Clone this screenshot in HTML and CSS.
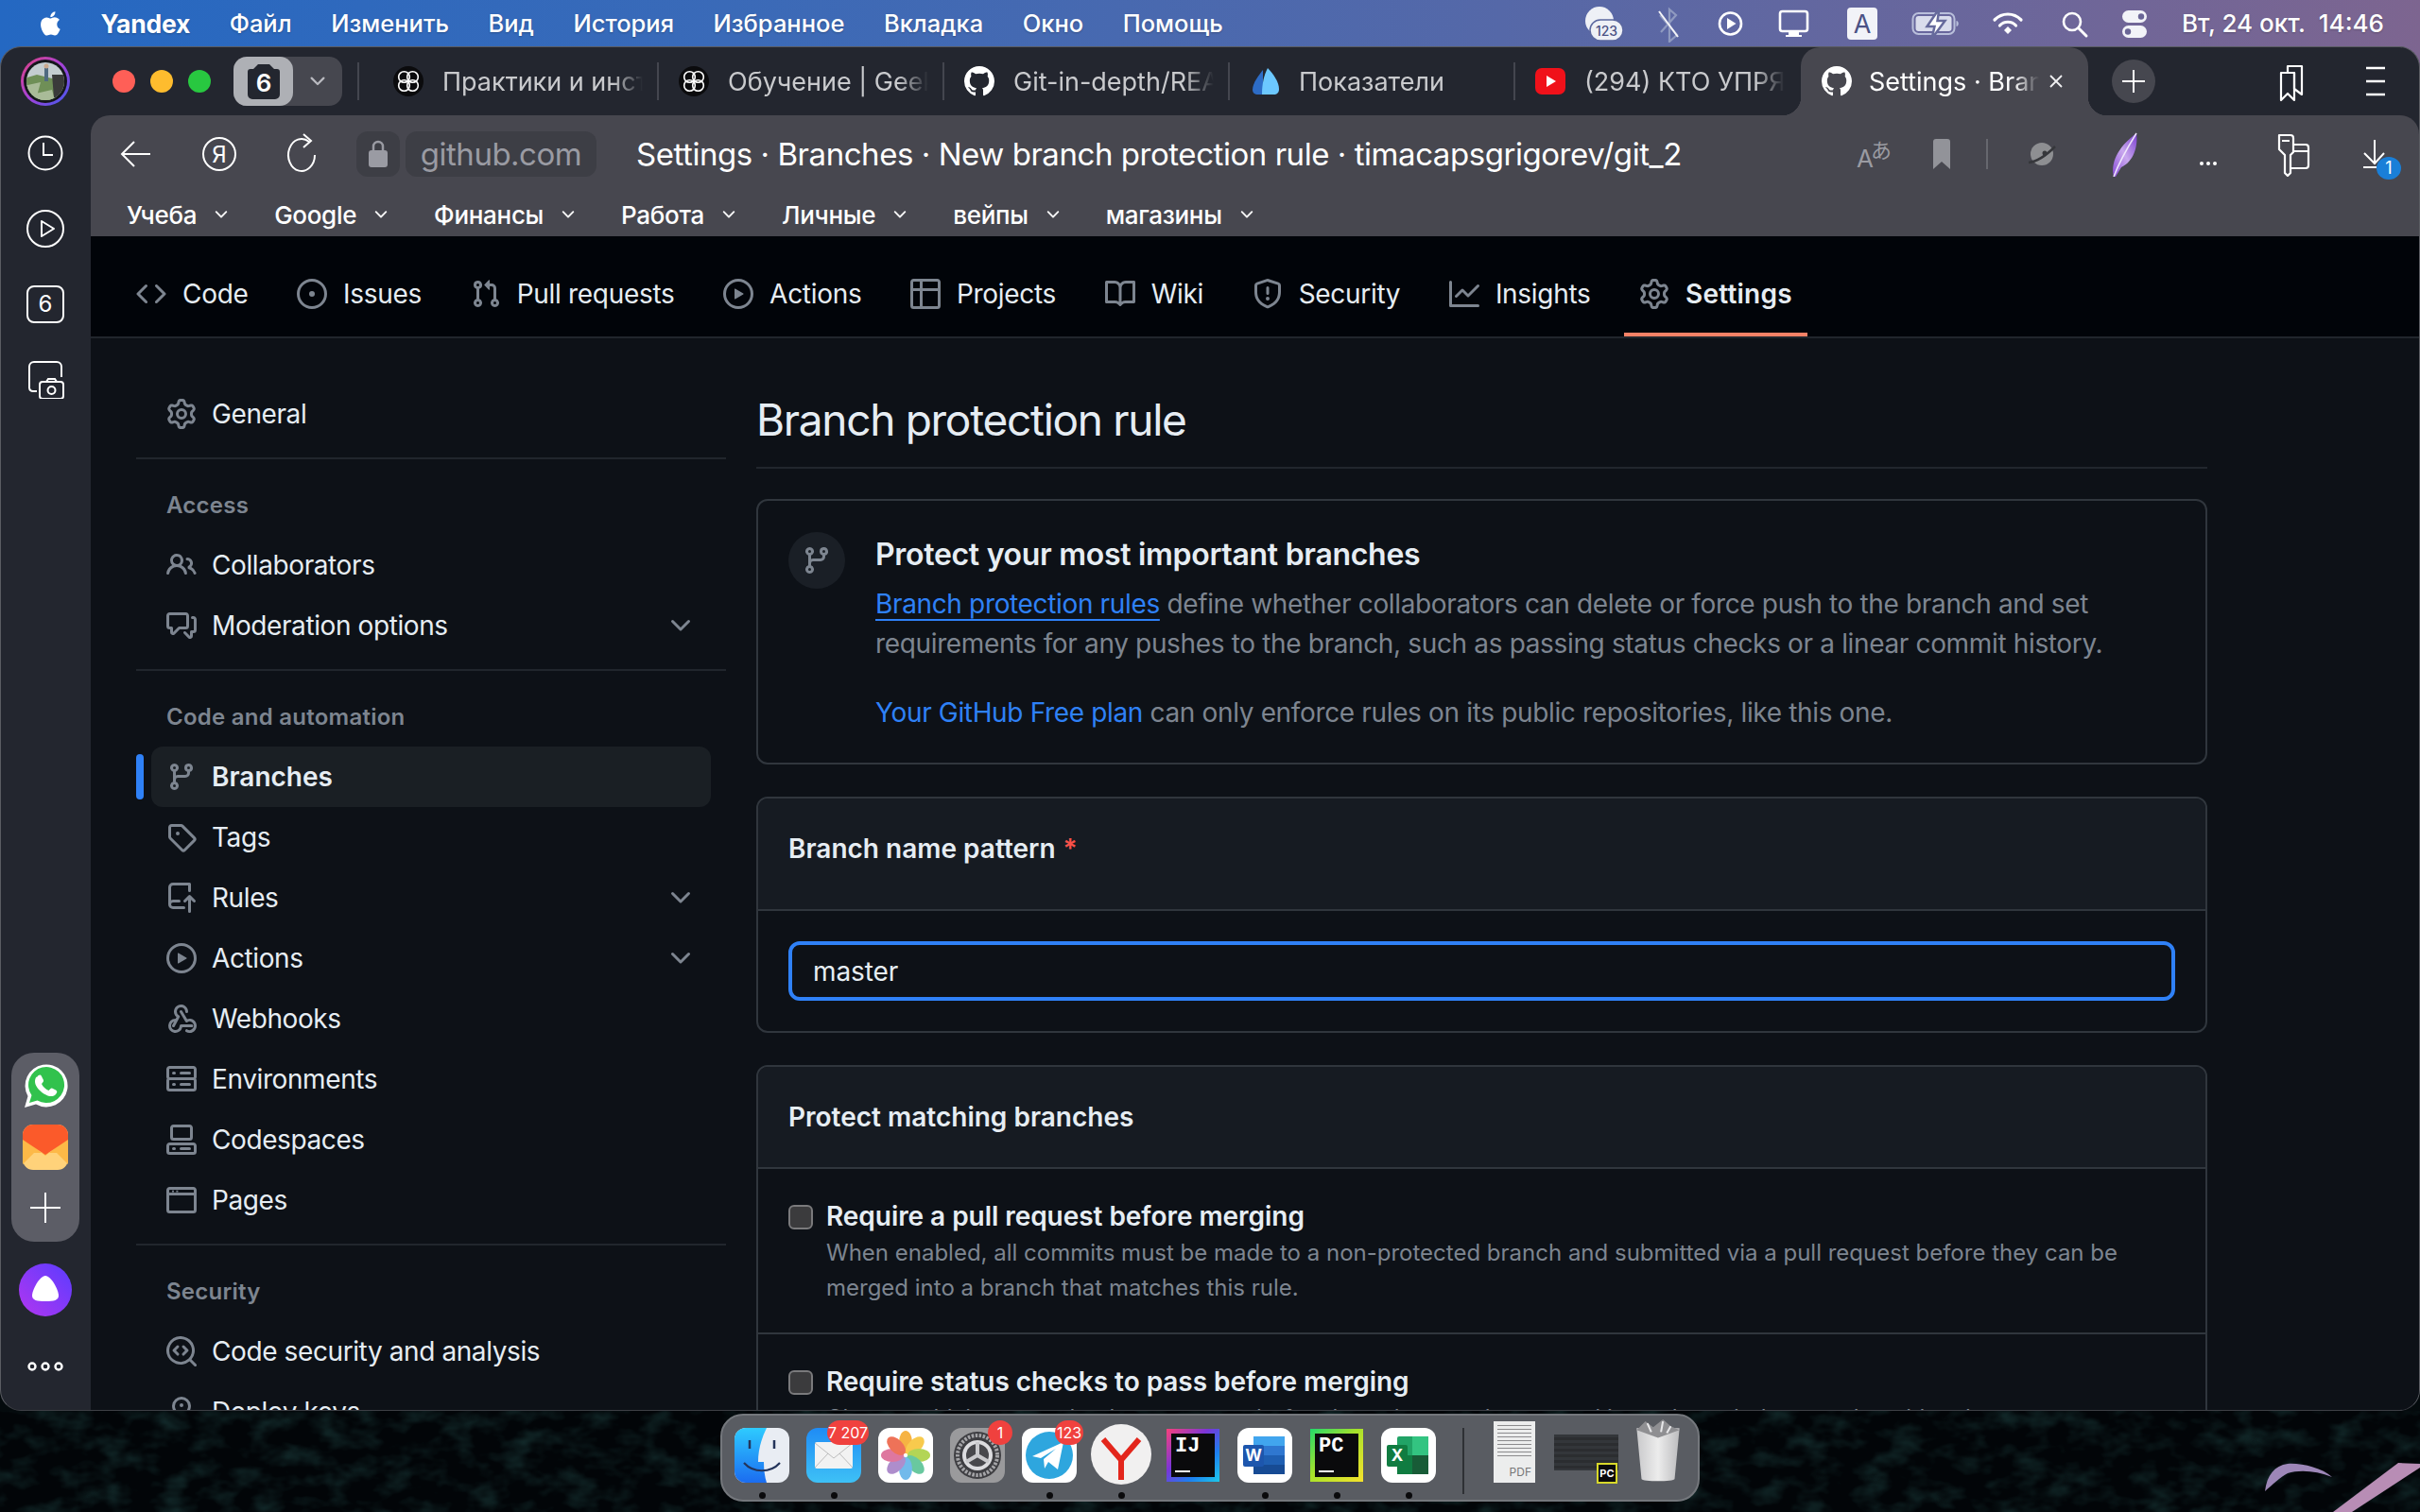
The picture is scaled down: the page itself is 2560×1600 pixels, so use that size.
FILE: index.html
```html
<!DOCTYPE html>
<html lang="ru">
<head>
    <meta charset="UTF-8">
    <title>Settings · Branches · New branch protection rule</title>
    <link rel="stylesheet" href="styles.css">
</head>
<body>
    <!-- Octicons -->
    <svg class="sprite">
        <symbol id="i-code" viewBox="0 0 16 16"><path d="m11.28 3.22 4.25 4.25a.75.75 0 0 1 0 1.06l-4.25 4.25a.749.749 0 0 1-1.275-.326.749.749 0 0 1 .215-.734L13.94 8l-3.72-3.72a.749.749 0 0 1 .326-1.275.749.749 0 0 1 .734.215Zm-6.56 0a.751.751 0 0 1 1.042.018.751.751 0 0 1 .018 1.042L2.06 8l3.72 3.72a.749.749 0 0 1-.326 1.275.749.749 0 0 1-.734-.215L.47 8.53a.75.75 0 0 1 0-1.06Z"/></symbol>
        <symbol id="i-issue" viewBox="0 0 16 16"><path d="M8 9.5a1.5 1.5 0 1 0 0-3 1.5 1.5 0 0 0 0 3Z"/><path d="M8 0a8 8 0 1 1 0 16A8 8 0 0 1 8 0ZM1.5 8a6.5 6.5 0 1 0 13 0 6.5 6.5 0 0 0-13 0Z"/></symbol>
        <symbol id="i-pr" viewBox="0 0 16 16"><path d="M1.5 3.25a2.25 2.25 0 1 1 3 2.122v5.256a2.251 2.251 0 1 1-1.5 0V5.372A2.25 2.25 0 0 1 1.5 3.25Zm5.677-.177L9.573.677A.25.25 0 0 1 10 .854V2.5h1A2.5 2.5 0 0 1 13.5 5v5.628a2.251 2.251 0 1 1-1.5 0V5a1 1 0 0 0-1-1h-1v1.646a.25.25 0 0 1-.427.177L7.177 3.427a.25.25 0 0 1 0-.354ZM3.75 2.5a.75.75 0 1 0 0 1.5.75.75 0 0 0 0-1.5Zm0 9.5a.75.75 0 1 0 0 1.5.75.75 0 0 0 0-1.5Zm8.25.75a.75.75 0 1 0 1.5 0 .75.75 0 0 0-1.5 0Z"/></symbol>
        <symbol id="i-play" viewBox="0 0 16 16"><path d="M8 0a8 8 0 1 1 0 16A8 8 0 0 1 8 0ZM1.5 8a6.5 6.5 0 1 0 13 0 6.5 6.5 0 0 0-13 0Zm4.879-2.773 4.264 2.559a.25.25 0 0 1 0 .428l-4.264 2.559A.25.25 0 0 1 6 10.559V5.442a.25.25 0 0 1 .379-.215Z"/></symbol>
        <symbol id="i-table" viewBox="0 0 16 16"><path d="M0 1.75C0 .784.784 0 1.75 0h12.5C15.216 0 16 .784 16 1.75v12.5A1.75 1.75 0 0 1 14.25 16H1.75A1.75 1.75 0 0 1 0 14.25ZM6.5 6.5v8h7.75a.25.25 0 0 0 .25-.25V6.5Zm8-1.5V1.75a.25.25 0 0 0-.25-.25H6.5V5Zm-13 1.5v7.75c0 .138.112.25.25.25H5v-8ZM5 5V1.5H1.75a.25.25 0 0 0-.25.25V5Z"/></symbol>
        <symbol id="i-book" viewBox="0 0 16 16"><path d="M0 1.75A.75.75 0 0 1 .75 1h4.253c1.227 0 2.317.59 3 1.501A3.743 3.743 0 0 1 11.006 1h4.245a.75.75 0 0 1 .75.75v10.5a.75.75 0 0 1-.75.75h-4.507a2.25 2.25 0 0 0-1.591.659l-.622.621a.75.75 0 0 1-1.06 0l-.622-.621A2.25 2.25 0 0 0 5.258 13H.75a.75.75 0 0 1-.75-.75Zm7.251 10.324.004-5.073-.002-2.253A2.25 2.25 0 0 0 5.003 2.5H1.5v9h3.757a3.75 3.75 0 0 1 1.994.574ZM8.755 4.75l-.004 7.322a3.752 3.752 0 0 1 1.992-.572H14.5v-9h-3.495a2.25 2.25 0 0 0-2.25 2.25Z"/></symbol>
        <symbol id="i-shield" viewBox="0 0 16 16"><path d="M7.467.133a1.748 1.748 0 0 1 1.066 0l5.25 1.68A1.75 1.75 0 0 1 15 3.48V7c0 1.566-.32 3.182-1.303 4.682-.983 1.498-2.585 2.813-5.032 3.855a1.697 1.697 0 0 1-1.33 0c-2.447-1.042-4.049-2.357-5.032-3.855C1.32 10.182 1 8.566 1 7V3.48a1.75 1.75 0 0 1 1.217-1.667Zm.61 1.429a.25.25 0 0 0-.153 0l-5.25 1.68a.25.25 0 0 0-.174.238V7c0 1.358.275 2.666 1.057 3.86.784 1.194 2.121 2.34 4.366 3.297a.196.196 0 0 0 .154 0c2.245-.956 3.582-2.104 4.366-3.298C13.225 9.666 13.5 8.36 13.5 7V3.48a.251.251 0 0 0-.174-.237l-5.25-1.68ZM8.75 4.75v3a.75.75 0 0 1-1.5 0v-3a.75.75 0 0 1 1.5 0ZM9 10.5a1 1 0 1 1-2 0 1 1 0 0 1 2 0Z"/></symbol>
        <symbol id="i-graph" viewBox="0 0 16 16"><path d="M1.5 1.75V13.5h13.75a.75.75 0 0 1 0 1.5H.75a.75.75 0 0 1-.75-.75V1.75a.75.75 0 0 1 1.5 0Zm14.28 2.53-5.25 5.25a.75.75 0 0 1-1.06 0L7 7.06 4.28 9.78a.751.751 0 0 1-1.042-.018.751.751 0 0 1-.018-1.042l3.25-3.25a.75.75 0 0 1 1.06 0L10 7.94l4.72-4.72a.751.751 0 0 1 1.042.018.751.751 0 0 1 .018 1.042Z"/></symbol>
        <symbol id="i-gear" viewBox="0 0 16 16"><path d="M8 0a8.2 8.2 0 0 1 .701.031C9.444.095 9.99.645 10.16 1.29l.288 1.107c.018.066.079.158.212.224.231.114.454.243.668.386.123.082.233.09.299.071l1.103-.303c.644-.176 1.392.021 1.82.63.27.385.506.792.704 1.218.315.675.111 1.422-.364 1.891l-.814.806c-.049.048-.098.147-.088.294.016.257.016.515 0 .772-.01.147.038.246.088.294l.814.806c.475.469.679 1.216.364 1.891a7.977 7.977 0 0 1-.704 1.217c-.428.61-1.176.807-1.82.63l-1.102-.302c-.067-.019-.177-.011-.3.071a5.909 5.909 0 0 1-.668.386c-.133.066-.194.158-.211.224l-.29 1.106c-.168.646-.715 1.196-1.458 1.26a8.006 8.006 0 0 1-1.402 0c-.743-.064-1.289-.614-1.458-1.26l-.289-1.106c-.018-.066-.079-.158-.212-.224a5.738 5.738 0 0 1-.668-.386c-.123-.082-.233-.09-.299-.071l-1.103.303c-.644.176-1.392-.021-1.82-.63a8.12 8.12 0 0 1-.704-1.218c-.315-.675-.111-1.422.363-1.891l.815-.806c.05-.048.098-.147.088-.294a6.214 6.214 0 0 1 0-.772c.01-.147-.038-.246-.088-.294l-.815-.806C.635 6.045.431 5.298.746 4.623a7.92 7.92 0 0 1 .704-1.217c.428-.61 1.176-.807 1.82-.63l1.102.302c.067.019.177.011.3-.071.214-.143.437-.272.668-.386.133-.066.194-.158.211-.224l.29-1.106C6.009.645 6.556.095 7.299.03 7.53.01 7.764 0 8 0Zm-.571 1.525c-.036.003-.108.036-.137.146l-.289 1.105c-.147.561-.549.967-.998 1.189-.173.086-.34.183-.5.29-.417.278-.97.423-1.529.27l-1.103-.303c-.109-.03-.175.016-.195.045-.22.312-.412.644-.573.99-.014.031-.021.11.059.19l.815.806c.411.406.562.957.53 1.456a4.709 4.709 0 0 0 0 .582c.032.499-.119 1.05-.53 1.456l-.815.806c-.081.08-.073.159-.059.19.162.346.353.677.573.989.02.03.085.076.195.046l1.102-.303c.56-.153 1.113-.008 1.53.27.161.107.328.204.501.29.447.222.85.629.997 1.189l.289 1.105c.029.109.101.143.137.146a6.6 6.6 0 0 0 1.142 0c.036-.003.108-.036.137-.146l.289-1.105c.147-.561.549-.967.998-1.189.173-.086.34-.183.5-.29.417-.278.97-.423 1.529-.27l1.103.303c.109.029.175-.016.195-.045.22-.313.411-.644.573-.99.014-.031.021-.11-.059-.19l-.815-.806c-.411-.406-.562-.957-.53-1.456a4.709 4.709 0 0 0 0-.582c-.032-.499.119-1.05.53-1.456l.815-.806c.081-.08.073-.159.059-.19a6.464 6.464 0 0 0-.573-.989c-.02-.03-.085-.076-.195-.046l-1.102.303c-.56.153-1.113.008-1.53-.27a4.44 4.44 0 0 0-.501-.29c-.447-.222-.85-.629-.997-1.189l-.289-1.105c-.029-.11-.101-.143-.137-.146a6.6 6.6 0 0 0-1.142 0ZM11 8a3 3 0 1 1-6 0 3 3 0 0 1 6 0ZM9.5 8a1.5 1.5 0 1 0-3.001.001A1.5 1.5 0 0 0 9.5 8Z"/></symbol>
        <symbol id="i-people" viewBox="0 0 16 16"><path d="M2 5.5a3.5 3.5 0 1 1 5.898 2.549 5.508 5.508 0 0 1 3.034 4.084.75.75 0 1 1-1.482.235 4 4 0 0 0-7.9 0 .75.75 0 0 1-1.482-.236A5.507 5.507 0 0 1 3.102 8.05 3.493 3.493 0 0 1 2 5.5ZM11 4a3.001 3.001 0 0 1 2.22 5.018 5.01 5.01 0 0 1 2.56 3.012.749.749 0 0 1-.885.954.752.752 0 0 1-.549-.514 3.507 3.507 0 0 0-2.522-2.372.75.75 0 0 1-.574-.73v-.352a.75.75 0 0 1 .416-.672A1.5 1.5 0 0 0 11 5.5.75.75 0 0 1 11 4Zm-5.5-.5a2 2 0 1 0-.001 3.999A2 2 0 0 0 5.5 3.5Z"/></symbol>
        <symbol id="i-comment" viewBox="0 0 16 16"><path d="M1.75 1h8.5c.966 0 1.75.784 1.75 1.75v5.5A1.75 1.75 0 0 1 10.25 10H7.061l-2.574 2.573A1.458 1.458 0 0 1 2 11.543V10h-.25A1.75 1.75 0 0 1 0 8.25v-5.5C0 1.784.784 1 1.75 1ZM1.5 2.75v5.5c0 .138.112.25.25.25h1a.75.75 0 0 1 .75.75v2.19l2.72-2.72a.749.749 0 0 1 .53-.22h3.5a.25.25 0 0 0 .25-.25v-5.5a.25.25 0 0 0-.25-.25h-8.5a.25.25 0 0 0-.25.25Zm13 2a.25.25 0 0 0-.25-.25h-.5a.75.75 0 0 1 0-1.5h.5c.966 0 1.75.784 1.75 1.75v5.5A1.75 1.75 0 0 1 14.25 12H14v1.543a1.458 1.458 0 0 1-2.487 1.03L9.22 12.28a.749.749 0 0 1 .326-1.275.749.749 0 0 1 .734.215l2.22 2.22v-2.19a.75.75 0 0 1 .75-.75h1a.25.25 0 0 0 .25-.25Z"/></symbol>
        <symbol id="i-branch" viewBox="0 0 16 16"><path d="M9.5 3.25a2.25 2.25 0 1 1 3 2.122V6A2.5 2.5 0 0 1 10 8.5H6a1 1 0 0 0-1 1v1.128a2.251 2.251 0 1 1-1.5 0V5.372a2.25 2.25 0 1 1 1.5 0v1.836A2.493 2.493 0 0 1 6 7h4a1 1 0 0 0 1-1v-.628A2.25 2.25 0 0 1 9.5 3.25Zm-6 0a.75.75 0 1 0 1.5 0 .75.75 0 0 0-1.5 0Zm8.25-.75a.75.75 0 1 0 0 1.5.75.75 0 0 0 0-1.5ZM4.25 12a.75.75 0 1 0 0 1.5.75.75 0 0 0 0-1.5Z"/></symbol>
        <symbol id="i-tag" viewBox="0 0 16 16"><path d="M1 7.775V2.75C1 1.784 1.784 1 2.75 1h5.025c.464 0 .91.184 1.238.513l6.25 6.25a1.75 1.75 0 0 1 0 2.474l-5.026 5.026a1.75 1.75 0 0 1-2.474 0l-6.25-6.25A1.752 1.752 0 0 1 1 7.775Zm1.5 0c0 .066.026.13.073.177l6.25 6.25a.25.25 0 0 0 .354 0l5.025-5.025a.25.25 0 0 0 0-.354l-6.25-6.25a.25.25 0 0 0-.177-.073H2.75a.25.25 0 0 0-.25.25ZM6 5a1 1 0 1 1 0 2 1 1 0 0 1 0-2Z"/></symbol>
        <symbol id="i-rules" viewBox="0 0 16 16"><path d="M1 2.5A2.5 2.5 0 0 1 3.5 0h8.75a.75.75 0 0 1 .75.75v3.5a.75.75 0 0 1-1.5 0V1.5h-8a1 1 0 0 0-1 1v6.708A2.492 2.492 0 0 1 3.5 9h3.25a.75.75 0 0 1 0 1.5H3.5a1 1 0 0 0 0 2h5.75a.75.75 0 0 1 0 1.5H3.5A2.5 2.5 0 0 1 1 11.5Zm13.23 7.79h-.001l-1.224-1.224v6.184a.75.75 0 0 1-1.5 0V9.066L10.28 10.29a.75.75 0 0 1-1.06-1.061l2.505-2.504a.75.75 0 0 1 1.06 0L15.29 9.23a.751.751 0 0 1-.018 1.042.751.751 0 0 1-1.042.018Z"/></symbol>
        <symbol id="i-webhook" viewBox="0 0 16 16"><path d="M5.5 4.25a2.25 2.25 0 0 1 4.5 0 .75.75 0 0 0 1.5 0 3.75 3.75 0 1 0-6.14 2.889l-2.272 4.258a.75.75 0 0 0 1.324.706L7 7.25a.75.75 0 0 0-.309-1.015A2.25 2.25 0 0 1 5.5 4.25Z"/><path d="M7.364 3.607a.75.75 0 0 1 1.03.257l2.608 4.349a3.75 3.75 0 1 1-.628 6.785.75.75 0 0 1 .752-1.299 2.25 2.25 0 1 0-.033-3.88.75.75 0 0 1-1.03-.256L7.107 4.636a.75.75 0 0 1 .257-1.03Z"/><path d="M2.5 11.75a2.25 2.25 0 0 1 2.25-2.25.75.75 0 0 0 0-1.5 3.75 3.75 0 1 0 3.675 4.5h5.075a.75.75 0 0 0 0-1.5H7.75a.75.75 0 0 0-.75.75 2.25 2.25 0 0 1-4.5 0Z"/></symbol>
        <symbol id="i-server" viewBox="0 0 16 16"><path d="M1.75 1h12.5c.966 0 1.75.784 1.75 1.75v4c0 .372-.116.717-.314 1 .198.283.314.628.314 1v4a1.75 1.75 0 0 1-1.75 1.75H1.75A1.75 1.75 0 0 1 0 12.75v-4c0-.372.116-.717.314-1A1.739 1.739 0 0 1 0 6.75v-4C0 1.784.784 1 1.75 1ZM1.5 2.75v4c0 .138.112.25.25.25h12.5a.25.25 0 0 0 .25-.25v-4a.25.25 0 0 0-.25-.25H1.75a.25.25 0 0 0-.25.25Zm.25 5.75a.25.25 0 0 0-.25.25v4c0 .138.112.25.25.25h12.5a.25.25 0 0 0 .25-.25v-4a.25.25 0 0 0-.25-.25ZM7 4.75A.75.75 0 0 1 7.75 4h4.5a.75.75 0 0 1 0 1.5h-4.5A.75.75 0 0 1 7 4.75ZM7.75 10h4.5a.75.75 0 0 1 0 1.5h-4.5a.75.75 0 0 1 0-1.5ZM3 4.75A.75.75 0 0 1 3.75 4h.5a.75.75 0 0 1 0 1.5h-.5A.75.75 0 0 1 3 4.75ZM3.75 10h.5a.75.75 0 0 1 0 1.5h-.5a.75.75 0 0 1 0-1.5Z"/></symbol>
        <symbol id="i-codespaces" viewBox="0 0 16 16"><path d="M0 11.25c0-.966.784-1.75 1.75-1.75h12.5c.966 0 1.75.784 1.75 1.75v3A1.75 1.75 0 0 1 14.25 16H1.75A1.75 1.75 0 0 1 0 14.25Zm2-9.5C2 .784 2.784 0 3.75 0h8.5C13.216 0 14 .784 14 1.75v5a1.75 1.75 0 0 1-1.75 1.75h-8.5A1.75 1.75 0 0 1 2 6.75Zm1.75-.25a.25.25 0 0 0-.25.25v5c0 .138.112.25.25.25h8.5a.25.25 0 0 0 .25-.25v-5a.25.25 0 0 0-.25-.25Zm-2 9.5a.25.25 0 0 0-.25.25v3c0 .138.112.25.25.25h12.5a.25.25 0 0 0 .25-.25v-3a.25.25 0 0 0-.25-.25Z"/><path d="M7 12.75a.75.75 0 0 1 .75-.75h4.5a.75.75 0 0 1 0 1.5h-4.5a.75.75 0 0 1-.75-.75Zm-4 0a.75.75 0 0 1 .75-.75h.5a.75.75 0 0 1 0 1.5h-.5a.75.75 0 0 1-.75-.75Z"/></symbol>
        <symbol id="i-browser" viewBox="0 0 16 16"><path d="M0 2.75C0 1.784.784 1 1.750 1h12.500c.966 0 1.750.784 1.750 1.750v10.500A1.750 1.750 0 0 1 14.250 15H1.750A1.750 1.750 0 0 1 0 13.250ZM14.500 5.500h-13v7.750c0 .138.112.25.25.25h12.500a.25.25 0 0 0 .25-.25Zm-13-1.500h13V2.750a.25.25 0 0 0-.25-.25H1.750a.25.25 0 0 0-.25.25ZM3 2.900h1v.9H3Zm2.200 0h1v.9h-1Z"/></symbol>
        <symbol id="i-codescan" viewBox="0 0 16 16"><path d="M8.47 4.97a.75.75 0 0 0 0 1.06L9.94 7.5 8.47 8.97a.75.75 0 1 0 1.06 1.06l2-2a.75.75 0 0 0 0-1.06l-2-2a.75.75 0 0 0-1.06 0ZM6.53 6.03a.75.75 0 0 0-1.06-1.06l-2 2a.75.75 0 0 0 0 1.06l2 2a.75.75 0 1 0 1.06-1.06L5.06 7.5l1.47-1.47Z"/><path d="M12.246 13.307a7.501 7.501 0 1 1 1.06-1.06l2.474 2.473a.749.749 0 0 1-.326 1.275.749.749 0 0 1-.734-.215ZM1.5 7.5a6.002 6.002 0 0 0 3.608 5.504 6.002 6.002 0 0 0 6.486-1.117.748.748 0 0 1 .292-.293A6 6 0 1 0 1.5 7.5Z"/></symbol>
        <symbol id="i-key" viewBox="0 0 16 16"><path d="M8 0a5 5 0 0 1 .75 9.94V11h1.5a.75.75 0 0 1 0 1.5h-1.5v2.75a.75.75 0 0 1-1.5 0V9.94A5 5 0 0 1 8 0Zm0 1.5a3.5 3.5 0 1 0 0 7 3.5 3.5 0 0 0 0-7ZM8 3.5a1 1 0 1 1 0 2 1 1 0 0 1 0-2Z"/></symbol>
        <symbol id="i-chevron" viewBox="0 0 16 16"><path d="M12.78 5.22a.749.749 0 0 1 0 1.06l-4.25 4.25a.749.749 0 0 1-1.06 0L3.22 6.28a.749.749 0 1 1 1.06-1.06L8 8.939l3.72-3.719a.749.749 0 0 1 1.06 0Z"/></symbol>
        <symbol id="i-github" viewBox="0 0 16 16"><path d="M8 0c4.42 0 8 3.58 8 8a8.013 8.013 0 0 1-5.45 7.59c-.4.08-.55-.17-.55-.38 0-.27.01-1.13.01-2.2 0-.75-.25-1.23-.54-1.48 1.78-.2 3.65-.88 3.65-3.95 0-.88-.31-1.59-.82-2.15.08-.2.36-1.02-.08-2.12 0 0-.67-.22-2.2.82-.64-.18-1.32-.27-2-.27-.68 0-1.36.09-2 .27-1.53-1.03-2.2-.82-2.2-.82-.44 1.1-.16 1.92-.08 2.12-.51.56-.82 1.28-.82 2.15 0 3.06 1.86 3.75 3.64 3.95-.23.2-.44.55-.51 1.07-.46.21-1.61.55-2.33-.66-.15-.24-.6-.83-1.23-.82-.67.01-.27.38.01.53.34.19.73.9.82 1.13.16.45.68 1.31 2.69.94 0 .67.01 1.3.01 1.49 0 .21-.15.45-.55.38A7.995 7.995 0 0 1 0 8c0-4.42 3.58-8 8-8Z"/></symbol>
        <symbol id="i-knot" viewBox="0 0 32 32"><circle cx="16" cy="16" r="16" fill="#0b0b0d"/><g fill="none" stroke="#fff" stroke-width="1.600"><circle cx="11.500" cy="11.500" r="5.800"/><circle cx="20.500" cy="11.500" r="5.800"/><circle cx="11.500" cy="20.500" r="5.800"/><circle cx="20.500" cy="20.500" r="5.800"/></g></symbol>
    </svg>

    <!-- macOS menu bar -->
    <div class="menubar">
        <svg class="apple" viewBox="0 0 24 24"><path d="M17.05 12.54c-.03-2.55 2.08-3.77 2.18-3.83-1.19-1.74-3.04-1.98-3.7-2.01-1.57-.16-3.07.93-3.87.93-.8 0-2.03-.9-3.34-.88-1.72.03-3.3 1-4.19 2.54-1.79 3.1-.46 7.69 1.28 10.21.85 1.23 1.86 2.61 3.19 2.56 1.28-.05 1.77-.83 3.31-.83 1.54 0 1.98.83 3.34.8 1.38-.02 2.25-1.25 3.09-2.49.98-1.43 1.38-2.82 1.4-2.89-.03-.01-2.68-1.03-2.71-4.11zM14.5 5.05c.71-.86 1.19-2.05 1.06-3.24-1.02.04-2.26.68-2.99 1.54-.66.76-1.23 1.97-1.08 3.14 1.14.09 2.3-.58 3.01-1.44z"/></svg>
        <strong class="menu-app">Yandex</strong>
        <span>Файл</span>
        <span>Изменить</span>
        <span>Вид</span>
        <span>История</span>
        <span>Избранное</span>
        <span>Вкладка</span>
        <span>Окно</span>
        <span>Помощь</span>
        <div class="tray">
            <svg width="70" height="40" viewBox="-35 -20 70 40"><circle cx="-4" cy="-3" r="15" fill="#eef0f6"/><rect x="-14" y="-4" width="35" height="22" rx="11" fill="#eef0f6" stroke="#5b679f" stroke-width="1.500"/><text x="3.500" y="13" class="tray-num">123</text></svg>
            <svg width="68" height="40" viewBox="-34 -20 68 40"><path d="M-9 -9 9 12 1 19V-15L8 -9-8 9" fill="none" stroke="#8f9ac0" stroke-width="2.200"/><path d="M-10 -13 10 14" stroke="#f4f4f8" stroke-width="2"/></svg>
            <svg width="63" height="40" viewBox="-31.500 -20 63 40"><circle r="11.500" fill="none" stroke="#fff" stroke-width="2.600"/><path d="M-3.500 -6 6 0-3.500 6Z" fill="#fff"/></svg>
            <svg width="70" height="40" viewBox="-35 -20 70 40"><rect x="-14" y="-13" width="29" height="21" rx="2.500" fill="none" stroke="#fff" stroke-width="2.600"/><path d="M-5 9h11v3h3v2h-17v-2h3Z" fill="#fff"/></svg>
            <svg width="76" height="40" viewBox="-38 -20 76 40"><rect x="-16" y="-17" width="32" height="34" rx="4" fill="#f2f3f8"/><text y="10" class="tray-key">A</text></svg>
            <svg width="79" height="40" viewBox="-39.500 -20 79 40"><rect x="-24" y="-11" width="44" height="22" rx="6" fill="none" stroke="#b9bfdb" stroke-width="2"/><rect x="-21" y="-8" width="38" height="16" rx="3" fill="#d9dcec"/><path d="M22 -3c3 0 3 6 0 6Z" fill="#b9bfdb"/><path d="M4 -16-9 3H-1L-4 16 10 -3H2Z" fill="#fff" stroke="#666a9c" stroke-width="2.500"/></svg>
            <svg width="74" height="40" viewBox="-37 -20 74 40"><g fill="none" stroke="#fff" stroke-width="3.200" stroke-linecap="round"><path d="M-14 -4C-6-12 6-12 14-4"/><path d="M-8.500 2C-4-3 4-3 8.500 2"/></g><path d="M-4 7 0 3 4 7 0 11Z" fill="#fff"/></svg>
            <svg width="66" height="40" viewBox="-33 -20 66 40"><circle cx="-2" cy="-2" r="9" fill="none" stroke="#fff" stroke-width="2.600"/><path d="M5 5 13 13" stroke="#fff" stroke-width="3" stroke-linecap="round"/></svg>
            <svg width="62" height="40" viewBox="-31 -20 62 40"><rect x="-13" y="-14" width="26" height="13" rx="6.500" fill="#f2f3f8"/><rect x="-13" y="2" width="26" height="13" rx="6.500" fill="#f2f3f8"/><circle cx="7" cy="-7.500" r="3.200" fill="#6a6696"/><circle cx="-7" cy="8.500" r="3.200" fill="#6a6696"/></svg>
            <span class="clock">Вт, 24 окт.&nbsp; 14:46</span>
        </div>
    </div>

    <div class="window">
        <!-- Browser side panel -->
        <aside class="side-panel">
            <div class="avatar">
                <svg width="46" height="46" viewBox="0 0 46 46"><defs><clipPath id="avatar-clip"><circle cx="23" cy="23" r="20"/></clipPath></defs><circle cx="23" cy="23" r="23" fill="#15171c"/><g clip-path="url(#avatar-clip)"><rect width="46" height="46" fill="#c4cdd0"/><path d="M0 20 14 16 46 24V46H0Z" fill="#6f8f57"/><path d="M0 28 18 24 12 46H0ZM4 38 30 32 34 46H6Z" fill="#a9bb98"/><path d="M30 16H44V40H32Z" fill="#3a3a3a"/><path d="M22 9h4v14h-4Z" fill="#4f6a80"/><circle cx="24" cy="7" r="2.500" fill="#caa98e"/></g></svg>
            </div>
            <div class="side-slot"><svg width="40" height="40" viewBox="0 0 40 40"><g fill="none" stroke="#fff" stroke-width="2"><circle cx="20" cy="20" r="17.500"/><path d="M18 9v13h10"/></g></svg></div>
            <div class="side-slot"><svg width="40" height="40" viewBox="0 0 40 40"><g fill="none" stroke="#fff" stroke-width="2"><circle cx="20" cy="20" r="19"/><path d="M16 12 29 20 16 28Z" stroke-linejoin="round"/></g></svg></div>
            <div class="side-slot"><svg width="40" height="40" viewBox="0 0 40 40"><rect x="1" y="1" width="38" height="38" rx="7" fill="none" stroke="#fff" stroke-width="2"/><text x="20" y="28" class="side-six">6</text></svg></div>
            <div class="side-slot"><svg width="40" height="40" viewBox="0 0 40 40"><g fill="none" stroke="#fff" stroke-width="2"><path d="M3 29V6a5 5 0 0 1 5-5h24a5 5 0 0 1 5 5v11M3 29a4 4 0 0 0 4 3h4"/><rect x="14" y="22" width="25" height="18" rx="3"/><path d="M21 22l2-3h7l2 3"/><circle cx="26.500" cy="31" r="4"/></g></svg></div>

            <div class="quick-apps">
                <svg width="48" height="48" viewBox="0 0 48 48"><path d="M2 46 5.500 34A22.500 22.500 0 1 1 14 42.500Z" fill="#fff"/><path d="M7 41 9.500 33A19 19 0 1 1 15.500 38.500Z" fill="#31c24d"/><path d="M15 14c2-3 4-3 5-1l2 4c.500 1-1 3-2 4 1.500 3 4 5.500 7.500 7 1-1 2.500-3 3.500-2.500l4 2c2 1 1.500 3-.500 5-3 2.500-7 2-12-1-6-4-9.500-9-9.500-13 0-2 .500-4 1.500-5Z" fill="#fff"/></svg>
                <svg width="48" height="48" viewBox="0 0 48 48"><rect width="48" height="48" rx="11" fill="#ffd27a"/><path d="M0 14 24 33 48 14V42L36 30H12L0 42Z" fill="#fdb947"/><path d="M0 11A11 11 0 0 1 11 0H37A11 11 0 0 1 48 11V16L24 32 0 16Z" fill="#fb5a2a"/></svg>
                <svg width="48" height="48" viewBox="0 0 48 48"><path d="M24 8V40M8 24H40" stroke="#fff" stroke-width="2"/></svg>
            </div>
            <svg class="alice" width="56" height="56" viewBox="0 0 56 56"><defs><linearGradient id="alice-bg" x1="1" y1="0" x2="0" y2="1"><stop offset="0" stop-color="#5a3cff"/><stop offset="1" stop-color="#b236f0"/></linearGradient></defs><circle cx="28" cy="28" r="28" fill="url(#alice-bg)"/><path d="M28 13c6 0 14 15 14 21 0 5-5 6-14 6s-14-1-14-6c0-6 8-21 14-21Z" fill="#fff"/></svg>
            <svg class="side-more" width="40" height="20" viewBox="0 0 40 20"><g fill="none" stroke="#fff" stroke-width="2.400"><circle cx="6" cy="10" r="3.500"/><circle cx="20" cy="10" r="3.500"/><circle cx="34" cy="10" r="3.500"/></g></svg>
        </aside>

        <div class="browser">
            <!-- Tab strip -->
            <div class="tabstrip">
                <span class="light light-red"></span>
                <span class="light light-yellow"></span>
                <span class="light light-green"></span>
                <div class="tab-group">
                    <span class="tab-group-count"><svg width="36" height="42" viewBox="0 0 36 42"><path d="M12 3h12l5 5h3a3 3 0 0 1 3 3v24a5 5 0 0 1-5 5H6a5 5 0 0 1-5-5V11a3 3 0 0 1 3-3h3Z" fill="#23262f"/><text x="18" y="32" class="group-six">6</text></svg></span>
                    <svg class="tab-group-arrow" viewBox="0 0 16 16"><use href="#i-chevron"/></svg>
                </div>
                <span class="tab-rule"></span>
                <div class="tab"><svg class="tab-icon" viewBox="0 0 32 32"><use href="#i-knot"/></svg><span class="tab-title">Практики и инструменты</span></div>
                <div class="tab"><svg class="tab-icon" viewBox="0 0 32 32"><use href="#i-knot"/></svg><span class="tab-title">Обучение | GeekBrains</span></div>
                <div class="tab"><svg class="tab-icon tab-icon-gh" viewBox="0 0 16 16"><use href="#i-github"/></svg><span class="tab-title">Git-in-depth/README.md</span></div>
                <div class="tab"><svg class="tab-icon" viewBox="0 0 32 32"><path d="M14 4C10 9 3 18 3 25c0 3 2 5 6 5h5Z" fill="#2d6cc6"/><path d="M19 2c-4 8-6 16-6 28h12c4 0 6-2 6-6 0-7-6-16-12-22Z" fill="#6cc8ff"/></svg><span class="tab-title">Показатели</span></div>
                <div class="tab tab-last"><svg class="tab-icon" viewBox="0 0 32 32"><rect y="2" width="32" height="28" rx="7" fill="#f0111a"/><path d="M12 10 22 16 12 22Z" fill="#fff"/></svg><span class="tab-title">(294) КТО УПРЯМЕЕ</span></div>
                <div class="tab tab-active">
                    <svg class="tab-icon tab-icon-gh" viewBox="0 0 16 16"><use href="#i-github"/></svg>
                    <span class="tab-title">Settings · Branches · New</span>
                    <svg class="tab-close" width="16" height="16" viewBox="0 0 16 16"><path d="M2 2 14 14M14 2 2 14" stroke="#f0f0f2" stroke-width="1.800"/></svg>
                </div>
                <span class="tab-new"><svg width="26" height="26" viewBox="0 0 26 26"><path d="M13 1V25M1 13H25" stroke="#fff" stroke-width="2"/></svg></span>
                <svg class="strip-tool" width="66" height="46" viewBox="-33 -23 66 46"><g fill="none" stroke="#fff" stroke-width="2.200" stroke-linejoin="round"><path d="M-4 -16H11V14L3 8V-9H-4Z"/><path d="M-11 -9H3V20L-4 13-11 20Z"/></g></svg>
                <svg class="strip-tool" width="102" height="46" viewBox="-56 -23 102 46"><path d="M-10 -14H10M-10 0H10M-10 14H10" stroke="#fff" stroke-width="2.600"/></svg>
            </div>

            <!-- Address bar + bookmarks -->
            <div class="chrome">
                <div class="address">
                    <svg width="88" height="48" viewBox="-44 -24 88 48"><path d="M15 0H-14M-2 -13-15 0-2 13" fill="none" stroke="#fff" stroke-width="2"/></svg>
                    <svg width="88" height="48" viewBox="-44 -24 88 48"><circle r="17" fill="none" stroke="#fff" stroke-width="2"/><text y="9" class="ya-letter">Я</text></svg>
                    <svg width="88" height="48" viewBox="-44 -24 88 48"><path d="M7 -13A14 17 0 1 0 13 1" fill="none" stroke="#fff" stroke-width="2"/><path d="M1 -21 9 -14 1 -7" fill="none" stroke="#fff" stroke-width="2"/></svg>
                    <span class="chip chip-lock"><svg width="20" height="30" viewBox="0 0 20 30"><path d="M5 12V7a5 5 0 0 1 10 0v5" fill="none" stroke="#9a9ba3" stroke-width="2.500"/><rect y="11" width="20" height="18" rx="3" fill="#9a9ba3"/></svg></span>
                    <span class="chip chip-host">github.com</span>
                    <span class="page-title">Settings · Branches · New branch protection rule · timacapsgrigorev/git_2</span>
                    <div class="tools">
                        <svg width="70" height="48" viewBox="-35 -24 70 48"><text x="-11" y="14" class="tr-a">A</text><text x="6" y="4" class="tr-kana">あ</text></svg>
                        <svg width="70" height="48" viewBox="-35 -24 70 48"><path d="M-9 -13a3 3 0 0 1 3-3H6a3 3 0 0 1 3 3V16L0 8-9 16Z" fill="#929399"/></svg>
                        <svg width="26" height="48" viewBox="-13 -24 26 48"><path d="M0 -16V16" stroke="#66676e" stroke-width="2"/></svg>
                        <svg width="90" height="48" viewBox="-45 -24 90 48"><circle r="12" fill="#8e8f92"/><path d="M-14 9C-4 8 6 0 14-8" stroke="#36373b" stroke-width="2.500" fill="none"/><circle cx="3" cy="-1" r="2.500" fill="#36373b"/></svg>
                        <svg width="86" height="48" viewBox="-43 -24 86 48"><defs><linearGradient id="quill" x1="1" y1="0" x2="0" y2="1"><stop offset="0" stop-color="#7a3fd0"/><stop offset=".5" stop-color="#c9a8ee"/><stop offset="1" stop-color="#8a4fd8"/></linearGradient></defs><path d="M-12 24C-16 6-4-10 12-22 14-8 9 8-4 14L-10 24Z" fill="url(#quill)"/><path d="M-12 24C-6 8 2-6 12-22" stroke="#efe6fb" stroke-width="1.500" fill="none"/></svg>
                        <svg width="90" height="48" viewBox="-45 -24 90 48"><circle cx="-7" cy="10" r="2" fill="#fff"/><circle cx="0" cy="10" r="2" fill="#fff"/><circle cx="7" cy="10" r="2" fill="#fff"/></svg>
                        <svg width="88" height="48" viewBox="-44 -24 88 48"><g fill="none" stroke="#fff" stroke-width="2.200"><path d="M-14 -20H-2A3 3 0 0 1 1 -17V-2L-2 1V20L-5 23-8 20V1L-14 -5Z" stroke-linejoin="round"/><path d="M1 -10H14A3 3 0 0 1 17 -7V12A3 3 0 0 1 14 15H-2"/><path d="M1 -3H17M-11 -14H-3"/></g></svg>
                        <span class="tool-download"><svg width="82" height="48" viewBox="-41 -24 82 48"><path d="M2 -15V10M-9 -1 2 10 12 -1M-10 14H4" fill="none" stroke="#fff" stroke-width="2"/></svg><span class="download-badge">1</span></span>
                    </div>
                </div>
                <div class="bookmarks">
                    <span class="bm">Учеба<svg class="bm-arrow" viewBox="0 0 16 16"><use href="#i-chevron"/></svg></span>
                    <span class="bm">Google<svg class="bm-arrow" viewBox="0 0 16 16"><use href="#i-chevron"/></svg></span>
                    <span class="bm">Финансы<svg class="bm-arrow" viewBox="0 0 16 16"><use href="#i-chevron"/></svg></span>
                    <span class="bm">Работа<svg class="bm-arrow" viewBox="0 0 16 16"><use href="#i-chevron"/></svg></span>
                    <span class="bm">Личные<svg class="bm-arrow" viewBox="0 0 16 16"><use href="#i-chevron"/></svg></span>
                    <span class="bm">вейпы<svg class="bm-arrow" viewBox="0 0 16 16"><use href="#i-chevron"/></svg></span>
                    <span class="bm">магазины<svg class="bm-arrow" viewBox="0 0 16 16"><use href="#i-chevron"/></svg></span>
                </div>
            </div>

            <!-- Repository navigation -->
            <nav class="repo-nav">
                <a class="repo-tab"><svg class="oct"><use href="#i-code"/></svg>Code</a>
                <a class="repo-tab"><svg class="oct"><use href="#i-issue"/></svg>Issues</a>
                <a class="repo-tab"><svg class="oct"><use href="#i-pr"/></svg>Pull requests</a>
                <a class="repo-tab"><svg class="oct"><use href="#i-play"/></svg>Actions</a>
                <a class="repo-tab"><svg class="oct"><use href="#i-table"/></svg>Projects</a>
                <a class="repo-tab"><svg class="oct"><use href="#i-book"/></svg>Wiki</a>
                <a class="repo-tab"><svg class="oct"><use href="#i-shield"/></svg>Security</a>
                <a class="repo-tab"><svg class="oct"><use href="#i-graph"/></svg>Insights</a>
                <a class="repo-tab repo-tab-active"><svg class="oct"><use href="#i-gear"/></svg>Settings</a>
            </nav>

            <div class="page">
                <!-- Settings menu -->
                <div class="settings-menu">
                    <a class="menu-item"><svg class="oct"><use href="#i-gear"/></svg>General</a>
                    <hr class="menu-rule">
                    <h3 class="menu-heading">Access</h3>
                    <a class="menu-item"><svg class="oct"><use href="#i-people"/></svg>Collaborators</a>
                    <a class="menu-item"><svg class="oct"><use href="#i-comment"/></svg>Moderation options<svg class="menu-arrow"><use href="#i-chevron"/></svg></a>
                    <hr class="menu-rule">
                    <h3 class="menu-heading">Code and automation</h3>
                    <a class="menu-item menu-item-active"><svg class="oct"><use href="#i-branch"/></svg>Branches</a>
                    <a class="menu-item"><svg class="oct"><use href="#i-tag"/></svg>Tags</a>
                    <a class="menu-item"><svg class="oct"><use href="#i-rules"/></svg>Rules<svg class="menu-arrow"><use href="#i-chevron"/></svg></a>
                    <a class="menu-item"><svg class="oct"><use href="#i-play"/></svg>Actions<svg class="menu-arrow"><use href="#i-chevron"/></svg></a>
                    <a class="menu-item"><svg class="oct"><use href="#i-webhook"/></svg>Webhooks</a>
                    <a class="menu-item"><svg class="oct"><use href="#i-server"/></svg>Environments</a>
                    <a class="menu-item"><svg class="oct"><use href="#i-codespaces"/></svg>Codespaces</a>
                    <a class="menu-item"><svg class="oct"><use href="#i-browser"/></svg>Pages</a>
                    <hr class="menu-rule">
                    <h3 class="menu-heading">Security</h3>
                    <a class="menu-item"><svg class="oct"><use href="#i-codescan"/></svg>Code security and analysis</a>
                    <a class="menu-item"><svg class="oct"><use href="#i-key"/></svg>Deploy keys</a>
                </div>

                <!-- Rule form -->
                <main class="rule">
                    <h1 class="rule-title">Branch protection rule</h1>

                    <section class="box box-intro">
                        <span class="intro-icon"><svg class="oct-sm"><use href="#i-branch"/></svg></span>
                        <div>
                            <h2 class="intro-title">Protect your most important branches</h2>
                            <p class="intro-text"><a class="link link-under">Branch protection rules</a> define whether collaborators can delete or force push to the branch and set requirements for any pushes to the branch, such as passing status checks or a linear commit history.</p>
                            <p class="intro-text intro-plan"><a class="link">Your GitHub Free plan</a> can only enforce rules on its public repositories, like this one.</p>
                        </div>
                    </section>

                    <section class="box">
                        <div class="box-head box-head-tall">Branch name pattern <span class="required">*</span></div>
                        <div class="box-body"><input class="pattern" type="text" value="master"></div>
                    </section>

                    <section class="box">
                        <div class="box-head">Protect matching branches</div>
                        <div class="check-row">
                            <input class="check" type="checkbox">
                            <div>
                                <div class="check-title">Require a pull request before merging</div>
                                <p class="check-note">When enabled, all commits must be made to a non-protected branch and submitted via a pull request before they can be merged into a branch that matches this rule.</p>
                            </div>
                        </div>
                        <div class="check-row">
                            <input class="check" type="checkbox">
                            <div>
                                <div class="check-title">Require status checks to pass before merging</div>
                                <p class="check-note">Choose which status checks must pass before branches can be merged into a branch that matches this rule.</p>
                            </div>
                        </div>
                    </section>
                </main>
            </div>
        </div>
    </div>

    <!-- Desktop and Dock -->
    <div class="desktop">
        <svg class="wallpaper" width="2560" height="107" viewBox="0 0 2560 107">
            <defs><filter id="leaves" x="0" y="0" width="100%" height="100%"><feTurbulence type="fractalNoise" baseFrequency=".03 .05" numOctaves="3" seed="7"/><feColorMatrix values="0 0 0 0 .03  0 0 0 0 .15  0 0 0 0 .14  0 1.600 0 0 -.68"/></filter></defs>
            <rect class="wallpaper-leaves" width="2560" height="107" filter="url(#leaves)"/>
            <path d="M2396 85C2398 68 2406 58 2420 56 2434 55 2456 60 2467 70 2450 63 2432 62 2420 66 2412 70 2404 78 2396 85Z" fill="#9d87b8"/>
            <path d="M2537 55 2560 56V60L2488 107H2468Z" fill="#b88db5"/>
        </svg>
        <div class="dock">
            <div class="dock-item dock-on">
                <svg class="dock-icon" viewBox="0 0 58 58"><defs><linearGradient id="finder-bg" x1="0" y1="0" x2="0" y2="1"><stop offset="0" stop-color="#2ecbff"/><stop offset="1" stop-color="#1b6cf0"/></linearGradient></defs><rect width="58" height="58" rx="12" fill="#e9edf3"/><path d="M12 0H34C28 12 25 24 25 36H31C31 44 32 52 34 58H12A12 12 0 0 1 0 46V12A12 12 0 0 1 12 0Z" fill="url(#finder-bg)"/><path d="M16 13V22M42 13V22" stroke="#24345a" stroke-width="2.500"/><path d="M10 37C20 48 38 48 48 37" fill="none" stroke="#24345a" stroke-width="2.200"/></svg>
            </div>
            <div class="dock-item dock-on">
                <svg class="dock-icon" viewBox="0 0 58 58"><defs><linearGradient id="mail-bg" x1="0" y1="0" x2="0" y2="1"><stop offset="0" stop-color="#1f8cf5"/><stop offset="1" stop-color="#3ec1f6"/></linearGradient></defs><rect width="58" height="58" rx="12" fill="url(#mail-bg)"/><rect x="9" y="15" width="40" height="28" rx="2" fill="#f2f2f2"/><path d="M9 16 29 32 49 16M9 42 23 27M49 42 35 27" fill="none" stroke="#bdbdbd" stroke-width="1"/></svg>
                <span class="dock-badge dock-badge-mail">7 207</span>
            </div>
            <div class="dock-item">
                <svg class="dock-icon" viewBox="-29 -29 58 58"><rect x="-29" y="-29" width="58" height="58" rx="12" fill="#fff"/><g opacity=".85"><ellipse cy="-14" rx="7" ry="12" fill="#f5a623"/><ellipse cy="-14" rx="7" ry="12" fill="#f7c12e" transform="rotate(45)"/><ellipse cy="-14" rx="7" ry="12" fill="#a6ce39" transform="rotate(90)"/><ellipse cy="-14" rx="7" ry="12" fill="#4fbf8f" transform="rotate(135)"/><ellipse cy="-14" rx="7" ry="12" fill="#5aaee8" transform="rotate(180)"/><ellipse cy="-14" rx="7" ry="12" fill="#a17ac4" transform="rotate(225)"/><ellipse cy="-14" rx="7" ry="12" fill="#d9608f" transform="rotate(270)"/><ellipse cy="-14" rx="7" ry="12" fill="#ec5a3c" transform="rotate(315)"/></g></svg>
            </div>
            <div class="dock-item">
                <svg class="dock-icon" viewBox="-29 -29 58 58"><rect x="-29" y="-29" width="58" height="58" rx="12" fill="#9a9a9c"/><circle r="25" fill="#3e3e42"/><circle r="21" fill="none" stroke="#a5a5a8" stroke-width="4" stroke-dasharray="2.500 1.500"/><circle r="16" fill="#dcdcdf"/><circle r="12" fill="#48484c"/><path d="M0 -14V0L12 7M0 0-12 7" stroke="#c9c9cc" stroke-width="4" fill="none"/></svg>
                <span class="dock-badge dock-badge-round">1</span>
            </div>
            <div class="dock-item dock-on">
                <svg class="dock-icon" viewBox="0 0 58 58"><rect width="58" height="58" rx="12" fill="#fff"/><circle cx="29" cy="29" r="25" fill="#2ea6de"/><path d="M11 30 44 15 38 44 28 36 24 43 23 33 36 22 20 32Z" fill="#fff"/></svg>
                <span class="dock-badge dock-badge-tg">123</span>
            </div>
            <div class="dock-item dock-on">
                <svg class="dock-icon dock-icon-ya" viewBox="0 0 64 64"><ellipse cx="32" cy="32" rx="32" ry="32" fill="#f1f0f0"/><path d="M13 16 32 38 51 16M32 36V59" fill="none" stroke="#e3261c" stroke-width="6"/></svg>
            </div>
            <div class="dock-item">
                <div class="ide ide-ij"><div class="ide-inner"><span class="ide-name">IJ</span><span class="ide-dash"></span></div></div>
            </div>
            <div class="dock-item dock-on">
                <svg class="dock-icon" viewBox="0 0 58 58"><rect width="58" height="58" rx="12" fill="#fff"/><rect x="17" y="9" width="33" height="40" rx="2" fill="#2f77d0"/><rect x="17" y="9" width="33" height="10" fill="#41a5ee"/><rect x="17" y="29" width="33" height="10" fill="#1f5fb2"/><rect x="17" y="39" width="33" height="10" fill="#174b94"/><rect x="6" y="18" width="22" height="23" rx="2" fill="#1d56ad"/><text x="17" y="35" class="office-letter">W</text></svg>
            </div>
            <div class="dock-item dock-on">
                <div class="ide ide-pc"><div class="ide-inner"><span class="ide-name">PC</span><span class="ide-dash"></span></div></div>
            </div>
            <div class="dock-item dock-on">
                <svg class="dock-icon" viewBox="0 0 58 58"><rect width="58" height="58" rx="12" fill="#fff"/><rect x="17" y="9" width="33" height="40" rx="2" fill="#21a366"/><rect x="33" y="9" width="17" height="20" fill="#33c481"/><rect x="17" y="29" width="16" height="20" fill="#107c41"/><rect x="33" y="29" width="17" height="20" fill="#185c37"/><rect x="6" y="18" width="22" height="23" rx="2" fill="#107c41"/><text x="17" y="35" class="office-letter">X</text></svg>
            </div>
            <span class="dock-rule"></span>
            <div class="dock-item">
                <div class="pdf"><span class="pdf-lines"></span><span class="pdf-label">PDF</span></div>
            </div>
            <div class="dock-item">
                <div class="shot"><span class="shot-badge">PC</span></div>
            </div>
            <div class="dock-item">
                <svg class="dock-icon dock-icon-trash" viewBox="0 0 50 66"><defs><linearGradient id="trash-bg" x1="0" y1="0" x2="1" y2="0"><stop offset="0" stop-color="#c9c9cb"/><stop offset=".5" stop-color="#ececec"/><stop offset="1" stop-color="#bcbcbe"/></linearGradient></defs><path d="M3 10 8 62c0 3 34 3 34 0L47 10Z" fill="url(#trash-bg)"/><path d="M3 12 12 3 20 9 30 1 38 8 47 12 25 20Z" fill="#8f8f92"/><path d="M14 5 18 14M30 3 28 14M38 8 34 15" stroke="#e7e7e9" stroke-width="2"/></svg>
            </div>
        </div>
    </div>
</body>
</html>
```

FILE: styles.css
```css
* {
    box-sizing: border-box;
}

body {
    width: 2560px;
    height: 1600px;
    margin: 0;
    overflow: hidden;
    display: flex;
    flex-direction: column;
    font-family: Inter, "Noto Sans", sans-serif;
    color: #e6edf3;
    background:
        linear-gradient(90deg, #2468c2 0%, #3a6ab8 30%, #5568a8 62%, #7d6590 100%) top / 100% 90px no-repeat,
        #040a0d;
}

.sprite {
    display: none;
}

/* macOS menu bar */
.menubar {
    height: 49px;
    flex: none;
    display: flex;
    align-items: center;
    gap: 41.5px;
    padding-left: 39px;
    font-size: 25.5px;
    font-weight: 500;
    color: #fff;
    text-shadow: 0 1px 2px rgba(0, 0, 0, 0.25);
}
.apple {
    width: 30px;
    height: 32px;
    margin-right: -4px;
    fill: #fff;
}
.menu-app {
    font-size: 26.5px;
    font-weight: 700;
    letter-spacing: -0.2px;
}
.tray {
    margin-left: auto;
    display: flex;
    align-items: center;
    padding-right: 38px;
}
.tray-num {
    font-size: 14px;
    text-anchor: middle;
    fill: #4b5285;
    text-shadow: none;
}
.tray-key {
    font-size: 27px;
    font-weight: 400;
    text-anchor: middle;
    fill: #4b5285;
    text-shadow: none;
}
.clock {
    margin-left: 19px;
    font-size: 26px;
    white-space: pre;
}

/* Window */
.window {
    height: 1444px;
    flex: none;
    display: flex;
    overflow: hidden;
    border: 1px solid #5a5c62;
    border-bottom-color: #3d3f45;
    border-radius: 22px;
    background: #23262f;
}

.side-panel {
    width: 95px;
    flex: none;
    display: flex;
    flex-direction: column;
    align-items: center;
    padding: 10px 2px 36px 0;
}
.avatar {
    width: 52px;
    height: 52px;
    padding: 3px;
    margin-bottom: 10px;
    border-radius: 50%;
    background: linear-gradient(135deg, #e0427f, #a542d8 50%, #3a5cf0);
}
.avatar svg {
    display: block;
}
.side-slot {
    height: 80px;
    display: flex;
    align-items: center;
    justify-content: center;
}
.side-six {
    font-size: 24px;
    text-anchor: middle;
    fill: #fff;
}
.quick-apps {
    margin-top: auto;
    width: 72px;
    height: 200px;
    display: flex;
    flex-direction: column;
    align-items: center;
    gap: 16px;
    padding-top: 12px;
    border-radius: 24px;
    background: #5c5d66;
}
.alice {
    flex: none;
    margin-top: 23px;
}
.side-more {
    flex: none;
    margin-top: 43px;
}

.browser {
    flex: 1;
    min-width: 0;
    display: flex;
    flex-direction: column;
}

/* Tab strip */
.tabstrip {
    height: 72px;
    flex: none;
    display: flex;
    align-items: center;
    padding-left: 23px;
    font-size: 27px;
}
.light {
    width: 24px;
    height: 24px;
    flex: none;
    margin-right: 16px;
    border-radius: 50%;
}
.light-red { background: #ff5f57; }
.light-yellow { background: #febc2e; }
.light-green { background: #28c840; }

.tab-group {
    width: 115px;
    height: 52px;
    flex: none;
    display: flex;
    margin-left: 8px;
    border-radius: 14px;
    background: #46474f;
}
.tab-group-count {
    width: 63px;
    display: flex;
    align-items: center;
    justify-content: center;
    border-radius: 14px;
    background: #aeb0b5;
}
.group-six {
    font-size: 26px;
    font-weight: 600;
    text-anchor: middle;
    fill: #fff;
}
.tab-group-arrow {
    width: 24px;
    height: 24px;
    margin: 14px auto;
    fill: #b9bac0;
}
.tab-rule {
    width: 2px;
    height: 40px;
    flex: none;
    margin: 0 15px 0 16px;
    background: #44464f;
}
.tab {
    width: 302px;
    height: 72px;
    flex: none;
    display: flex;
    align-items: center;
    gap: 20px;
    padding-left: 21px;
    color: #c9cacd;
    position: relative;
}
.tab:not(.tab-last):not(.tab-active)::after {
    content: "";
    position: absolute;
    right: 0;
    top: 16px;
    width: 2px;
    height: 40px;
    background: #44464f;
}
.tab-icon {
    width: 32px;
    height: 32px;
    flex: none;
}
.tab-icon-gh {
    fill: #fff;
}
.tab-title {
    width: 212px;
    overflow: hidden;
    white-space: nowrap;
    -webkit-mask-image: linear-gradient(90deg, #000 85%, transparent);
    mask-image: linear-gradient(90deg, #000 85%, transparent);
}
.tab-active {
    width: 304px;
    padding-left: 22px;
    gap: 18px;
    color: #fff;
    background: #47474f;
    border-radius: 20px 20px 0 0;
}
.tab-active .tab-title {
    width: 180px;
}
.tab-active::before,
.tab-active::after {
    content: "";
    position: absolute;
    bottom: 0;
    width: 20px;
    height: 20px;
}
.tab-active::before {
    left: -20px;
    background: radial-gradient(circle at 0 0, transparent 20px, #47474f 20.5px);
}
.tab-active::after {
    right: -20px;
    background: radial-gradient(circle at 100% 0, transparent 20px, #47474f 20.5px);
}
.tab-close {
    flex: none;
    margin-left: -8px;
}
.tab-new {
    width: 46px;
    height: 46px;
    flex: none;
    display: flex;
    align-items: center;
    justify-content: center;
    margin-left: 25px;
    border-radius: 50%;
    background: #46474f;
}
.strip-tool {
    flex: none;
}
.tab-new + .strip-tool {
    margin-left: auto;
}

/* Address bar + bookmarks */
.chrome {
    height: 128px;
    flex: none;
    background: #47474f;
    border-radius: 20px 20px 0 0;
}
.address {
    height: 82px;
    display: flex;
    align-items: center;
    padding-left: 4px;
}
.chip {
    height: 48px;
    display: flex;
    align-items: center;
    justify-content: center;
    border-radius: 12px;
    background: #3d3e45;
}
.chip-lock {
    width: 46px;
    margin-left: 13px;
}
.chip-host {
    width: 202px;
    margin-left: 6px;
    font-size: 33px;
    letter-spacing: -0.5px;
    color: #9a9ba3;
}
.page-title {
    margin-left: 42px;
    font-size: 33px;
    letter-spacing: -0.45px;
    white-space: nowrap;
    color: #fff;
}
.ya-letter {
    font-size: 24px;
    text-anchor: middle;
    fill: #fff;
}
.tools {
    margin-left: auto;
    display: flex;
    align-items: center;
    padding-right: 8px;
}
.tools svg {
    flex: none;
}
.tr-a {
    font-size: 26px;
    text-anchor: middle;
    fill: #9a9ba2;
}
.tr-kana {
    font-family: "Noto Sans CJK JP", sans-serif;
    font-size: 22px;
    text-anchor: middle;
    fill: #9a9ba2;
}
.tool-download {
    position: relative;
    display: block;
    height: 48px;
}
.download-badge {
    position: absolute;
    left: 45px;
    top: 27px;
    width: 26px;
    height: 24px;
    border-radius: 50%;
    background: #1a7fd8;
    font-size: 18px;
    line-height: 24px;
    text-align: center;
    color: #fff;
}
.bookmarks {
    height: 46px;
    display: flex;
    align-items: center;
    gap: 46px;
    padding-left: 38px;
    font-size: 26px;
    font-weight: 500;
    letter-spacing: -0.3px;
    color: #fff;
}
.bm {
    display: flex;
    align-items: center;
}
.bm-arrow {
    width: 20px;
    height: 20px;
    margin-left: 16px;
    fill: #fff;
}

/* Repository navigation */
.repo-nav {
    height: 108px;
    flex: none;
    display: flex;
    gap: 19.6px;
    padding: 15px 32px 0;
    background: #010409;
    border-bottom: 2px solid #21262d;
}
.repo-tab {
    height: 91px;
    display: flex;
    align-items: center;
    gap: 17px;
    padding: 0 16px;
    font-size: 28px;
    letter-spacing: -0.3px;
    color: #e6edf3;
    position: relative;
}
.repo-tab-active {
    font-weight: 600;
    letter-spacing: 0.2px;
}
.repo-tab-active::after {
    content: "";
    position: absolute;
    left: 0;
    right: 0;
    bottom: 0;
    height: 4px;
    background: #f78166;
}
.oct {
    width: 32px;
    height: 32px;
    flex: none;
    fill: #7d8590;
}

/* Page */
.page {
    flex: 1;
    min-height: 0;
    overflow: hidden;
    display: flex;
    gap: 32px;
    padding: 48px 0 0 48px;
    background: #0d1117;
}

.settings-menu {
    width: 624px;
    flex: none;
}
.menu-item {
    height: 64px;
    margin-left: 16px;
    margin-right: 16px;
    display: flex;
    align-items: center;
    gap: 16px;
    padding-left: 16px;
    border-radius: 12px;
    font-size: 28px;
    letter-spacing: -0.4px;
    color: #e6edf3;
    position: relative;
}
.menu-item-active {
    font-weight: 600;
    letter-spacing: 0;
    background: #1a1f24;
}
.menu-item-active::before {
    content: "";
    position: absolute;
    left: -16px;
    top: 8px;
    width: 8px;
    height: 48px;
    border-radius: 6px;
    background: #2f81f7;
}
.menu-arrow {
    width: 32px;
    height: 32px;
    margin-left: auto;
    margin-right: 16px;
    fill: #7d8590;
}
.menu-rule {
    height: 2px;
    margin: 14px 0 0;
    border: 0;
    background: #21262d;
}
.menu-heading {
    height: 80px;
    margin: 0 0 0 32px;
    padding-top: 33px;
    font-size: 24px;
    line-height: 32px;
    font-weight: 600;
    letter-spacing: 0.25px;
    color: #7d8590;
}

.rule {
    width: 1535px;
    flex: none;
    padding-top: 8px;
}
.rule-title {
    height: 82px;
    margin: 0 0 32px;
    padding-bottom: 20px;
    border-bottom: 2px solid #21262d;
    font-size: 46px;
    line-height: 60px;
    font-weight: 400;
    letter-spacing: -1.3px;
}

.box {
    margin-bottom: 34px;
    border: 2px solid #30363d;
    border-radius: 12px;
    overflow: hidden;
}
.box-intro {
    height: 281px;
    display: flex;
    gap: 32px;
    padding: 33px 32px 0;
}
.intro-icon {
    width: 60px;
    height: 60px;
    flex: none;
    display: flex;
    align-items: center;
    justify-content: center;
    border-radius: 50%;
    background: #1a1f26;
}
.oct-sm {
    width: 32px;
    height: 32px;
    fill: #7d8590;
}
.intro-title {
    margin: 0 0 7px;
    font-size: 32px;
    line-height: 48px;
    font-weight: 600;
    letter-spacing: -0.3px;
}
.intro-text {
    margin: 0;
    font-size: 28px;
    line-height: 42px;
    letter-spacing: -0.35px;
    color: #7d8590;
}
.intro-plan {
    margin-top: 31px;
}
.link {
    color: #2f81f7;
}
.link-under {
    text-decoration: underline;
    text-underline-offset: 6px;
    text-decoration-thickness: 2px;
}

.box-head {
    height: 108px;
    display: flex;
    align-items: center;
    gap: 8px;
    padding: 0 32px;
    background: #161b22;
    border-bottom: 2px solid #30363d;
    font-size: 28px;
    font-weight: 600;
}
.box-head-tall {
    height: 119px;
    align-items: flex-start;
    padding-top: 29px;
    line-height: 48px;
}
.required {
    color: #f85149;
}
.box-body {
    padding: 32px;
}
.pattern {
    display: block;
    width: 100%;
    height: 63px;
    padding: 0 22px;
    border: 4px solid #2f81f7;
    border-radius: 12px;
    outline: none;
    background: #0d1117;
    font-family: inherit;
    font-size: 28px;
    letter-spacing: -0.1px;
    color: #e6edf3;
}

.check-row {
    display: flex;
    gap: 14px;
    padding: 32px 32px 29px;
    border-bottom: 2px solid #30363d;
}
.check {
    width: 26px;
    height: 26px;
    flex: none;
    margin: 6px 0 0;
    appearance: none;
    border: 2px solid #7a7a7c;
    border-radius: 6px;
    background: #3b3b3d;
}
.check-title {
    font-size: 28px;
    line-height: 36px;
    font-weight: 600;
    letter-spacing: -0.05px;
}
.check-note {
    margin: 3px 0 0;
    font-size: 24px;
    line-height: 36.5px;
    color: #7d8590;
}

/* Desktop and Dock */
.desktop {
    flex: 1;
    position: relative;
    display: flex;
    justify-content: center;
    padding-top: 3px;
    background: #020508;
}
.wallpaper {
    position: absolute;
    left: 0;
    top: 0;
}
.wallpaper-leaves {
    opacity: 0.45;
}
.dock {
    width: 1036px;
    height: 93px;
    position: relative;
    display: flex;
    gap: 18px;
    padding: 13px 0 0 13px;
    border: 2px solid #74777c;
    border-radius: 24px;
    background: #595c62;
}
.dock-item {
    width: 58px;
    height: 74px;
    flex: none;
    position: relative;
}
.dock-on::after {
    content: "";
    position: absolute;
    left: 26px;
    top: 68px;
    width: 7px;
    height: 7px;
    border-radius: 50%;
    background: #0a0a0c;
}
.dock-icon {
    display: block;
    width: 58px;
    height: 58px;
}
.dock-icon-ya {
    width: 64px;
    height: 64px;
    margin: -4px -3px;
}
.dock-icon-trash {
    width: 52px;
    height: 68px;
    margin: -10px 3px;
}
.dock-badge {
    position: absolute;
    top: -8px;
    height: 26px;
    border-radius: 13px;
    background: #f0413e;
    font-size: 16px;
    line-height: 26px;
    text-align: center;
    white-space: nowrap;
    color: #fff;
}
.dock-badge-mail {
    left: 22px;
    width: 44px;
}
.dock-badge-round {
    left: 40px;
    width: 26px;
}
.dock-badge-tg {
    left: 35px;
    width: 30px;
}
.office-letter {
    font-size: 17px;
    font-weight: 700;
    text-anchor: middle;
    fill: #fff;
}
.ide {
    width: 56px;
    height: 56px;
    margin: 1px;
    padding: 5px;
}
.ide-ij {
    background: linear-gradient(135deg, #f9417a, #7b35d8 40%, #1d7ff0 70%, #1dc8e8);
}
.ide-pc {
    background: linear-gradient(135deg, #22d86b, #a6e22a 45%, #f6e22c);
}
.ide-inner {
    height: 100%;
    padding: 2px 4px;
    display: flex;
    flex-direction: column;
    justify-content: space-between;
    background: #0a0a0c;
}
.ide-name {
    font-family: "Liberation Mono", monospace;
    font-size: 22px;
    line-height: 24px;
    font-weight: 700;
    color: #fff;
}
.ide-dash {
    width: 16px;
    height: 2px;
    margin-bottom: 3px;
    background: #fff;
}
.dock-rule {
    width: 2px;
    height: 70px;
    flex: none;
    margin: 0 6px 0 10px;
    background: #2e3034;
}
.pdf {
    width: 44px;
    height: 65px;
    margin: -7px 7px 0;
    padding: 4px;
    display: flex;
    flex-direction: column;
    justify-content: space-between;
    background: #eceded;
}
.pdf-lines {
    height: 36px;
    background: repeating-linear-gradient(180deg, #8b8b8d 0 1px, #eceded 1px 4px);
}
.pdf-label {
    font-size: 12px;
    text-align: right;
    color: #777;
}
.shot {
    width: 68px;
    height: 38px;
    margin: 7px -5px;
    position: relative;
    background: repeating-linear-gradient(180deg, #33363a 0 3px, #2b2d30 3px 6px);
}
.shot-badge {
    position: absolute;
    right: 1px;
    bottom: -14px;
    width: 22px;
    height: 22px;
    border: 2px solid #d8d82a;
    background: #0a0a0c;
    font-size: 11px;
    font-weight: 700;
    line-height: 18px;
    text-align: center;
    color: #fff;
}
```
